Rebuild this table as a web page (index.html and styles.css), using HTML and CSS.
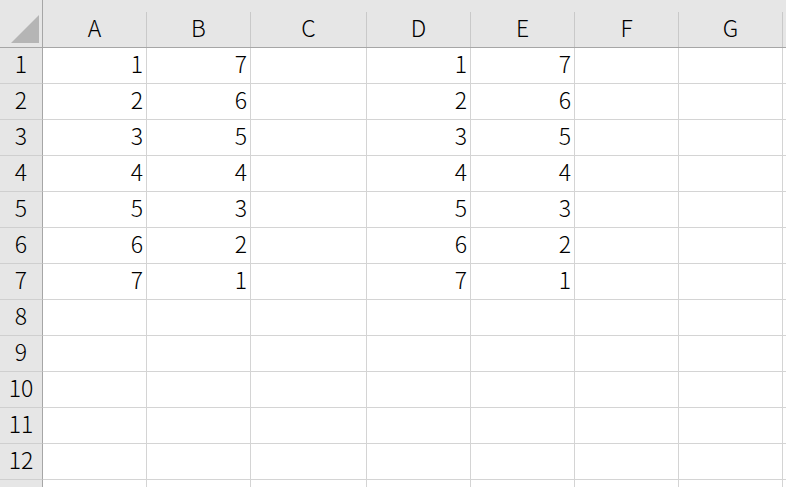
FILE: index.html
```html
<!DOCTYPE html>
<html lang="ja">
<head>
<meta charset="utf-8">
<link rel="stylesheet" href="styles.css">
</head>
<body>
<div class="sheet">
  <div class="corner"><svg class="tri" width="29" height="29" viewBox="0 0 29 29"><polygon points="28,0 28,28 0,28" fill="#b5b5b5"/></svg></div>
  <div class="colhead"><span class="lbl">A</span></div>
  <div class="colhead"><span class="lbl">B</span></div>
  <div class="colhead"><span class="lbl">C</span></div>
  <div class="colhead"><span class="lbl">D</span></div>
  <div class="colhead"><span class="lbl">E</span></div>
  <div class="colhead"><span class="lbl">F</span></div>
  <div class="colhead"><span class="lbl">G</span></div>
  <div class="colhead"><span class="lbl"></span></div>

  <div class="rowhead">1</div><div class="cell">1</div><div class="cell">7</div><div class="cell"></div><div class="cell">1</div><div class="cell">7</div><div class="cell"></div><div class="cell"></div><div class="cell"></div>
  <div class="rowhead">2</div><div class="cell">2</div><div class="cell">6</div><div class="cell"></div><div class="cell">2</div><div class="cell">6</div><div class="cell"></div><div class="cell"></div><div class="cell"></div>
  <div class="rowhead">3</div><div class="cell">3</div><div class="cell">5</div><div class="cell"></div><div class="cell">3</div><div class="cell">5</div><div class="cell"></div><div class="cell"></div><div class="cell"></div>
  <div class="rowhead">4</div><div class="cell">4</div><div class="cell">4</div><div class="cell"></div><div class="cell">4</div><div class="cell">4</div><div class="cell"></div><div class="cell"></div><div class="cell"></div>
  <div class="rowhead">5</div><div class="cell">5</div><div class="cell">3</div><div class="cell"></div><div class="cell">5</div><div class="cell">3</div><div class="cell"></div><div class="cell"></div><div class="cell"></div>
  <div class="rowhead">6</div><div class="cell">6</div><div class="cell">2</div><div class="cell"></div><div class="cell">6</div><div class="cell">2</div><div class="cell"></div><div class="cell"></div><div class="cell"></div>
  <div class="rowhead">7</div><div class="cell">7</div><div class="cell">1</div><div class="cell"></div><div class="cell">7</div><div class="cell">1</div><div class="cell"></div><div class="cell"></div><div class="cell"></div>
  <div class="rowhead">8</div><div class="cell"></div><div class="cell"></div><div class="cell"></div><div class="cell"></div><div class="cell"></div><div class="cell"></div><div class="cell"></div><div class="cell"></div>
  <div class="rowhead">9</div><div class="cell"></div><div class="cell"></div><div class="cell"></div><div class="cell"></div><div class="cell"></div><div class="cell"></div><div class="cell"></div><div class="cell"></div>
  <div class="rowhead">10</div><div class="cell"></div><div class="cell"></div><div class="cell"></div><div class="cell"></div><div class="cell"></div><div class="cell"></div><div class="cell"></div><div class="cell"></div>
  <div class="rowhead">11</div><div class="cell"></div><div class="cell"></div><div class="cell"></div><div class="cell"></div><div class="cell"></div><div class="cell"></div><div class="cell"></div><div class="cell"></div>
  <div class="rowhead">12</div><div class="cell"></div><div class="cell"></div><div class="cell"></div><div class="cell"></div><div class="cell"></div><div class="cell"></div><div class="cell"></div><div class="cell"></div>
  <div class="rowhead"></div><div class="cell"></div><div class="cell"></div><div class="cell"></div><div class="cell"></div><div class="cell"></div><div class="cell"></div><div class="cell"></div><div class="cell"></div>
</div>
</body>
</html>
```

FILE: styles.css
```css
html, body {
  margin: 0;
  padding: 0;
  background: #ffffff;
  overflow: hidden;
}

.sheet {
  display: grid;
  grid-template-columns: 43px 104px 104px 116px 104px 104px 104px 104px 40px;
  grid-template-rows: 48px repeat(13, 36px);
  font-family: "Noto Sans CJK JP", "Noto Sans", sans-serif;
  font-weight: 300;
  font-size: 23px;
  color: #000000;
  width: 786px;
  height: 487px;
  overflow: hidden;
}

.corner {
  background: #e6e6e6;
  border-right: 1px solid #a6a6a6;
  border-bottom: 1px solid #a6a6a6;
  box-sizing: border-box;
  display: flex;
  align-items: flex-end;
  justify-content: flex-end;
  padding: 0 2px 3px 0;
}

.tri {
  display: block;
}

.colhead {
  background: #e6e6e6;
  border-bottom: 1px solid #a6a6a6;
  box-sizing: border-box;
  padding-top: 12px;
  display: flex;
}

.colhead .lbl {
  flex: 1;
  border-right: 1px solid #c9c9c9;
  display: flex;
  align-items: center;
  justify-content: center;
  line-height: 1;
  padding-bottom: 5px;
}

.rowhead {
  background: #e6e6e6;
  border-right: 1px solid #a6a6a6;
  border-bottom: 1px solid #cfcfcf;
  box-sizing: border-box;
  display: flex;
  align-items: center;
  justify-content: center;
  line-height: 1;
  padding-bottom: 5px;
}

.cell {
  border-right: 1px solid #d4d4d4;
  border-bottom: 1px solid #d4d4d4;
  box-sizing: border-box;
  display: flex;
  align-items: center;
  justify-content: flex-end;
  padding-right: 3px;
  padding-bottom: 5px;
  line-height: 1;
}
```
